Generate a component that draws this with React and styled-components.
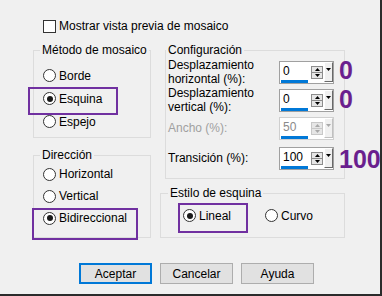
import React from 'react';
import styled, { createGlobalStyle } from 'styled-components';

const Global = createGlobalStyle`
  html, body { margin: 0; padding: 0; background: #f0f0f0; }
  body { font-family: "Liberation Sans", Arial, sans-serif; font-size: 12px; color: #000; }
  * { box-sizing: border-box; }
`;

const Window = styled.div`
  width: 382px;
  height: 296px;
  background: #f0f0f0;
  border-right: 2px solid #2b2b2b;
  border-bottom: 2px solid #2b2b2b;
  padding: 20px 0 0 33px;
  display: flex;
  flex-direction: column;
`;

const CheckRow = styled.label`
  display: flex;
  align-items: center;
  gap: 3px;
  height: 13px;
  margin-left: 10px;
  line-height: 13px;
`;

const CheckBox = styled.span`
  width: 13px;
  height: 13px;
  border: 1px solid #333;
  background: #fff;
  flex-shrink: 0;
`;

const Body = styled.div`
  display: grid;
  grid-template-columns: 118px 185px;
  column-gap: 9px;
  margin-top: 10px;
`;

const Column = styled.div`
  display: flex;
  flex-direction: column;
  gap: ${p => p.$gap}px;
`;

const Group = styled.fieldset`
  margin: 0 0 0 ${p => p.$indent || 0}px;
  padding: ${p => p.$pt || 0}px 0 0 0;
  min-width: 0;
  height: ${p => p.$h}px;
  border: 1px solid #dcdcdc;
  display: flex;
  flex-direction: column;
`;

const Legend = styled.legend`
  margin-left: ${p => p.$x}px;
  padding: 0 2px;
  font-size: 12px;
  line-height: 14px;
`;

const Option = styled.label`
  position: relative;
  display: flex;
  align-items: center;
  gap: 3px;
  height: ${p => p.$h}px;
  padding-left: ${p => p.$pl || 0}px;
  width: ${p => (p.$w ? `${p.$w}px` : 'auto')};
  flex-shrink: 0;
  ${p =>
    p.$hl
      ? `&::after {
          content: '';
          position: absolute;
          left: ${p.$hl.x}px;
          top: ${p.$hl.y}px;
          width: ${p.$hl.w}px;
          height: ${p.$hl.h}px;
          border: 2px solid #7030a0;
          pointer-events: none;
        }`
      : ''}
`;

const RadioCircle = styled.span`
  width: 13px;
  height: 13px;
  border-radius: 50%;
  border: 1px solid #333;
  background: #fff;
  flex-shrink: 0;
  display: flex;
  align-items: center;
  justify-content: center;
  &::before {
    content: '';
    width: 6px;
    height: 6px;
    border-radius: 50%;
    background: ${p => (p.$on ? '#1a1a1a' : 'transparent')};
  }
`;

const RadioRow = styled.div`
  display: flex;
  align-items: center;
  padding-left: ${p => p.$pl}px;
`;

const FieldRow = styled.div`
  display: flex;
  align-items: center;
  height: 28px;
  padding-left: 2px;
  margin-top: ${p => p.$mt || 0}px;
`;

const FieldLabel = styled.div`
  width: 111px;
  flex-shrink: 0;
  line-height: 14px;
  color: ${p => (p.$disabled ? '#a0a0a0' : '#000')};
`;

const Spin = styled.div`
  width: 55px;
  height: 23px;
  flex-shrink: 0;
  border: 1px solid ${p => (p.$disabled ? '#cfcfcf' : '#a0a0a0')};
  background: #fff;
  display: flex;
  align-items: center;
`;

const SpinValue = styled.div`
  align-self: flex-end;
  margin-left: 1px;
  width: 27px;
  height: 20px;
  padding-left: 2px;
  line-height: 17px;
  border-bottom: 3px solid #0078d7;
  color: ${p => (p.$disabled ? '#8a8a8a' : '#000')};
`;

const UpDown = styled.div`
  margin-left: 3px;
  width: 12px;
  height: 13px;
  border: 1px solid ${p => (p.$disabled ? '#c8c8c8' : '#8c8c8c')};
  background: #e6e6e6;
  display: flex;
  flex-direction: column;
`;

const UpDownCell = styled.div`
  flex: 1;
  display: flex;
  align-items: center;
  justify-content: center;
  border-top: ${p => (p.$split ? `1px solid ${p.$disabled ? '#c8c8c8' : '#8c8c8c'}` : 'none')};
`;

const DropBtn = styled.div`
  margin-left: 1px;
  width: 9px;
  height: 20px;
  background: #f0f0f0;
  border-top: 1px solid #fff;
  border-left: 1px solid #fff;
  border-right: 1px solid ${p => (p.$disabled ? '#c0c0c0' : '#696969')};
  border-bottom: 1px solid ${p => (p.$disabled ? '#c0c0c0' : '#696969')};
  display: flex;
  justify-content: center;
  padding-top: 5px;
`;

const BigNum = styled.div`
  align-self: flex-start;
  margin-left: 5px;
  margin-top: ${p => p.$mt || 0}px;
  flex-shrink: 0;
  white-space: nowrap;
  font-family: "Liberation Sans", Arial, sans-serif;
  font-weight: bold;
  font-size: 25px;
  line-height: 24px;
  color: #6a1f8e;
`;

const ButtonBar = styled.div`
  display: flex;
  gap: 8px;
  margin-top: 25px;
  padding-left: 46px;
`;

const Button = styled.button`
  width: 73px;
  height: 21px;
  padding: 0;
  font: inherit;
  color: #000;
  background: #e1e1e1;
  border: ${p => (p.$primary ? '2px solid #0078d7' : '1px solid #adadad')};
`;

const Tri = ({ up, color }) => (
  <svg width="5" height="3" viewBox="0 0 5 3">
    <polygon points={up ? '2.5,0 5,3 0,3' : '0,0 5,0 2.5,3'} fill={color} />
  </svg>
);

const Spinner = ({ value, disabled }) => {
  const c = disabled ? '#a8a8a8' : '#000';
  return (
    <Spin $disabled={disabled}>
      <SpinValue $disabled={disabled}>{value}</SpinValue>
      <UpDown $disabled={disabled}>
        <UpDownCell><Tri up color={c} /></UpDownCell>
        <UpDownCell $split $disabled={disabled}><Tri color={c} /></UpDownCell>
      </UpDown>
      <DropBtn $disabled={disabled}><Tri color={c} /></DropBtn>
    </Spin>
  );
};

const Radio = ({ on, children, ...rest }) => (
  <Option {...rest}>
    <RadioCircle $on={on} />
    <span>{children}</span>
  </Option>
);

export default function App() {
  return (
    <>
      <Global />
      <Window>
        <CheckRow>
          <CheckBox />
          <span>Mostrar vista previa de mosaico</span>
        </CheckRow>
        <Body>
          <Column $gap={10}>
            <Group $h={95} $pt={7}>
              <Legend $x={6}>Método de mosaico</Legend>
              <Radio $h={23} $pl={9}>Borde</Radio>
              <Radio $h={23} $pl={9} on $hl={{ x: -6, y: 0, w: 86, h: 24 }}>Esquina</Radio>
              <Radio $h={23} $pl={9}>Espejo</Radio>
            </Group>
            <Group $h={90} $pt={1}>
              <Legend $x={6}>Dirección</Legend>
              <Radio $h={22} $pl={9}>Horizontal</Radio>
              <Radio $h={22} $pl={9}>Vertical</Radio>
              <Radio $h={22} $pl={9} on $hl={{ x: -2, y: 1, w: 102, h: 28 }}>Bidireccional</Radio>
            </Group>
          </Column>
          <Column $gap={7}>
            <Group $h={136} $indent={5} $pt={1}>
              <Legend $x={0}>Configuración</Legend>
              <FieldRow>
                <FieldLabel>Desplazamiento<br />horizontal (%):</FieldLabel>
                <Spinner value="0" />
                <BigNum>0</BigNum>
              </FieldRow>
              <FieldRow>
                <FieldLabel>Desplazamiento<br />vertical (%):</FieldLabel>
                <Spinner value="0" />
                <BigNum $mt={1}>0</BigNum>
              </FieldRow>
              <FieldRow>
                <FieldLabel $disabled>Ancho (%):</FieldLabel>
                <Spinner value="50" disabled />
              </FieldRow>
              <FieldRow $mt={2}>
                <FieldLabel>Transición (%):</FieldLabel>
                <Spinner value="100" />
                <BigNum $mt={3}>100</BigNum>
              </FieldRow>
            </Group>
            <Group $h={52} $pt={3}>
              <Legend $x={7}>Estilo de esquina</Legend>
              <RadioRow $pl={22}>
                <Radio $h={25} $w={82} on $hl={{ x: -5, y: 0, w: 66, h: 26 }}>Lineal</Radio>
                <Radio $h={25}>Curvo</Radio>
              </RadioRow>
            </Group>
          </Column>
        </Body>
        <ButtonBar>
          <Button $primary>Aceptar</Button>
          <Button>Cancelar</Button>
          <Button>Ayuda</Button>
        </ButtonBar>
      </Window>
    </>
  );
}
